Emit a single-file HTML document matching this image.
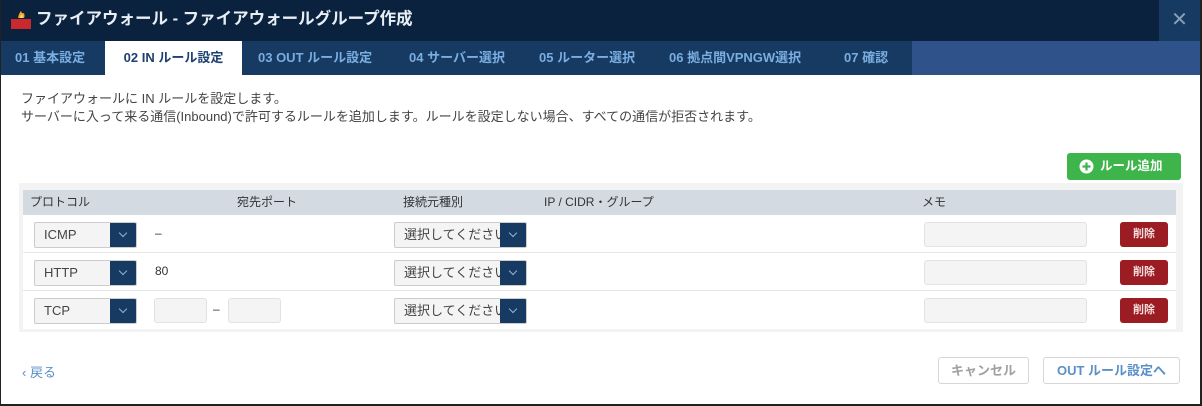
<!DOCTYPE html>
<html><head><meta charset="utf-8"><style>
*{box-sizing:border-box;margin:0;padding:0}
body{width:1202px;height:406px;overflow:hidden;background:#fff;font-family:"Liberation Sans","Noto Sans CJK JP",sans-serif;position:relative;color:#333}
.abs{position:absolute}
.hdr{left:0;top:0;width:1202px;height:41px;background:#0b223e}
.title{left:36px;top:8px;font-size:16.5px;font-weight:bold;color:#e8eef5;line-height:22px}
.close{left:1159px;top:0;width:41px;height:41px;background:#173a63;color:#8a9fb6;font-size:20px;text-align:center;line-height:40px}
.tabs{left:0;top:41px;width:1200px;height:34px;background:#30528a}
.tabbar{left:0;top:41px;width:912px;height:34px;background:#173a63}
.tab{top:41px;height:34px;line-height:34px;font-size:13px;font-weight:bold;color:#7aaee0}
.act{background:#fff;color:#1e4170}
.desc{left:21px;top:90px;font-size:13px;line-height:18px;color:#444}
.panel{left:19px;top:183px;width:1164px;height:149px;background:#f3f3f3}
.th{left:23px;top:190px;width:1153px;height:25px;background:#d3dae2}
.thx{top:190px;line-height:25px;font-size:12px;color:#333}
.row{left:23px;width:1153px;height:38px;background:#fff;border-bottom:1px solid #e6e6e6}
.sel{height:26px;background:#f4f4f4;border:1px solid #ccc;border-radius:2px;font-size:13px;line-height:24px;padding-left:9px;color:#444;overflow:hidden;white-space:nowrap}
.arr{position:absolute;right:-1px;top:-1px;width:27px;height:26px;background:#173a63}
.arr:after{content:"";position:absolute;left:10px;top:8px;width:5px;height:5px;border-right:1.5px solid #8fb4dc;border-bottom:1.5px solid #8fb4dc;transform:rotate(45deg)}
.inp{height:25px;background:#f4f4f4;border:1px solid #e2e2e2;border-radius:3px}
.del{left:1120px;width:48px;height:25px;background:#9c1c24;border-radius:3px;color:#f5dede;font-size:11px;font-weight:bold;text-align:center;line-height:25px}
.btn{height:27px;border:1px solid #d6d6d6;border-radius:3px;background:#fff;font-size:13px;font-weight:bold;text-align:center;line-height:25px}
</style></head><body>
<div class="abs hdr"></div>
<svg class="abs" style="left:10px;top:10px" width="22" height="20"><path d="M8 8 Q9 3 11 1 Q12 4 14 3 Q15 6 14 8 Z" fill="#f5a623"/><path d="M10 8 Q11 5 12 4 Q13 6 12.5 8Z" fill="#ffe27a"/><rect x="1" y="9" width="20" height="10" fill="#c9282d"/></svg>
<div class="abs title">ファイアウォール - ファイアウォールグループ作成</div>
<div class="abs close">✕</div>
<div class="abs tabs"></div>
<div class="abs tabbar"></div>
<div class="abs tab" style="left:15px">01 基本設定</div>
<div class="abs tab act" style="left:105px;width:137px;text-align:center">02 IN ルール設定</div>
<div class="abs tab" style="left:258px">03 OUT ルール設定</div>
<div class="abs tab" style="left:409px">04 サーバー選択</div>
<div class="abs tab" style="left:539px">05 ルーター選択</div>
<div class="abs tab" style="left:669px">06 拠点間VPNGW選択</div>
<div class="abs tab" style="left:844px">07 確認</div>
<div class="abs desc">ファイアウォールに IN ルールを設定します。<br>サーバーに入って来る通信(Inbound)で許可するルールを追加します。ルールを設定しない場合、すべての通信が拒否されます。</div>
<div class="abs" style="left:1067px;top:153px;width:114px;height:27px;background:#3db54a;border-radius:3px;color:#fff;font-size:12.5px;font-weight:bold;line-height:27px;padding-left:33px">ルール追加</div>
<svg class="abs" style="left:1079px;top:159px" width="15" height="15"><circle cx="7.5" cy="7.5" r="7" fill="#fff"/><path d="M7.5 3.5v8M3.5 7.5h8" stroke="#3db54a" stroke-width="2.2"/></svg>
<div class="abs panel"></div>
<div class="abs th"></div>
<div class="abs thx" style="left:30px">プロトコル</div>
<div class="abs thx" style="left:237px">宛先ポート</div>
<div class="abs thx" style="left:403px">接続元種別</div>
<div class="abs thx" style="left:544px">IP / CIDR・グループ</div>
<div class="abs thx" style="left:922px">メモ</div>

<div class="abs row" style="top:215px"></div>
<div class="abs row" style="top:253px"></div>
<div class="abs row" style="top:291px;border-bottom:none"></div>

<div class="abs sel" style="left:34px;top:222px;width:103px">ICMP<div class="arr"></div></div>
<div class="abs" style="left:155px;top:226px;font-size:12px">–</div>
<div class="abs sel" style="left:394px;top:222px;width:133px">選択してください<div class="arr"></div></div>
<div class="abs inp" style="left:924px;top:222px;width:163px"></div>
<div class="abs del" style="top:222px">削除</div>

<div class="abs sel" style="left:34px;top:260px;width:103px">HTTP<div class="arr"></div></div>
<div class="abs" style="left:155px;top:264px;font-size:12px">80</div>
<div class="abs sel" style="left:394px;top:260px;width:133px">選択してください<div class="arr"></div></div>
<div class="abs inp" style="left:924px;top:260px;width:163px"></div>
<div class="abs del" style="top:260px">削除</div>

<div class="abs sel" style="left:34px;top:298px;width:103px">TCP<div class="arr"></div></div>
<div class="abs inp" style="left:154px;top:298px;width:53px"></div>
<div class="abs" style="left:213px;top:302px;font-size:12px">–</div>
<div class="abs inp" style="left:228px;top:298px;width:53px"></div>
<div class="abs sel" style="left:394px;top:298px;width:133px">選択してください<div class="arr"></div></div>
<div class="abs inp" style="left:924px;top:298px;width:163px"></div>
<div class="abs del" style="top:298px">削除</div>

<div class="abs" style="left:22px;top:362px;font-size:13px;color:#5b8fc8">‹ 戻る</div>
<div class="abs btn" style="left:938px;top:357px;width:91px;color:#a0a0a0">キャンセル</div>
<div class="abs btn" style="left:1043px;top:357px;width:137px;color:#5b8fc8">OUT ルール設定へ</div>
<div class="abs" style="left:0;top:0;width:1px;height:406px;background:#222"></div>
<div class="abs" style="left:0;top:404px;width:1202px;height:2px;background:#222"></div>
<div class="abs" style="left:1200px;top:0;width:2px;height:406px;background:#222"></div>
</body></html>
